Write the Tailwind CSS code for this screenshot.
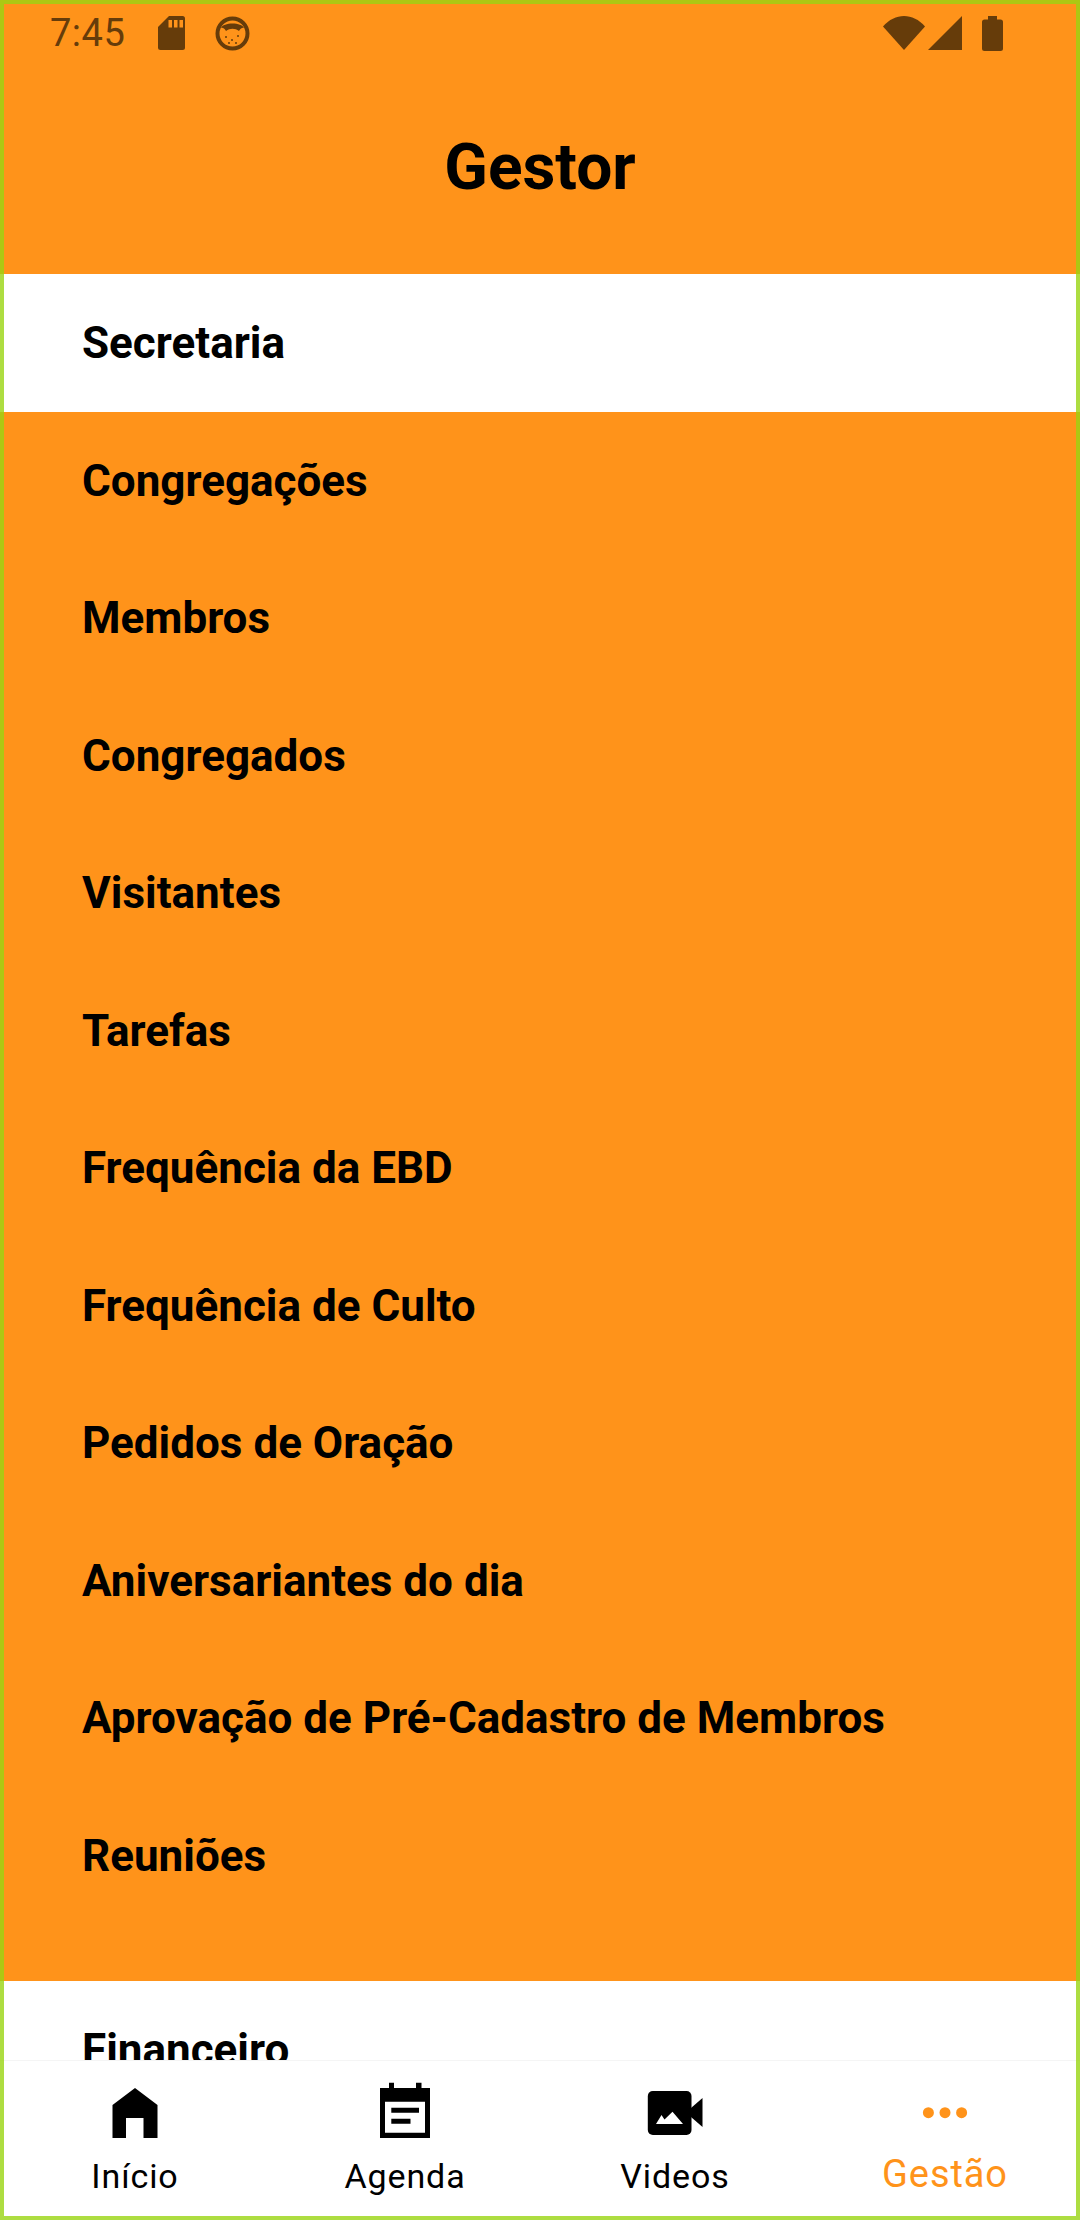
<!DOCTYPE html>
<html lang="pt">
<head>
<meta charset="utf-8">
<script src="https://cdn.jsdelivr.net/npm/@tailwindcss/browser@4"></script>
<title>Gestor</title>
</head>
<body class="m-0">
<div class="relative flex flex-col w-[1080px] h-[2220px] overflow-hidden bg-white font-['Roboto',sans-serif] text-black">
  <header class="shrink-0 h-[274px] bg-[#ff931a] flex flex-col">
    <div class="h-[66px] pt-[16px] pl-[50px] pr-[77px] flex items-start text-[#663c0a]">
      <span class="w-[108px] text-[38px] leading-[34px] tracking-[0.5px]">7:45</span>
      <svg class="w-[27px] h-[34px]" viewBox="0 0 27 34"><path fill="#663c0a" d="M11 0H24.5A2.5 2.5 0 0 1 27 2.500V31.500A2.500 2.500 0 0 1 24.500 34H2.500A2.500 2.500 0 0 1 0 31.500V11z"/><path fill="#ff931a" d="M10.500 4h3.500v7.500h-3.500zM16 4h3.500v7.500H16zM21.500 4H25v7.500h-3.500z"/></svg>
      <svg class="ml-[30px] w-[35px] h-[35px]" viewBox="0 0 35 35"><circle cx="17.500" cy="17.500" r="15" fill="#ff931a" stroke="#663c0a" stroke-width="4"/><path fill="#663c0a" d="M6 12C8 6 27 6 29 12C26 11 25 14 24 15C20 12 15 12 11 15C10 14 9 11 6 12z"/><g fill="#663c0a"><circle cx="11" cy="21" r="1"/><circle cx="17" cy="24" r="1"/><circle cx="23" cy="20" r="1"/><circle cx="14" cy="27" r="1"/><circle cx="21" cy="27" r="1"/></g></svg>
      <div class="flex-1"></div>
      <svg class="w-[42px] h-[34px]" viewBox="0 0 42 34"><path fill="#663c0a" d="M0 10.500C12 -3.500 30 -3.500 42 10.500L21 34z"/></svg>
      <svg class="ml-[3px] w-[34px] h-[34px]" viewBox="0 0 34 34"><path fill="#663c0a" d="M34 0V34H0z"/></svg>
      <svg class="ml-[20px] w-[21px] h-[35px]" viewBox="0 0 21 35"><path fill="#663c0a" d="M6 0H15V3.500H18.500A2.500 2.500 0 0 1 21 6V32.500A2.500 2.500 0 0 1 18.500 35H2.500A2.500 2.500 0 0 1 0 32.500V6A2.500 2.500 0 0 1 2.500 3.500H6z"/></svg>
    </div>
    <div class="flex-1 flex items-center justify-center">
      <h1 class="text-[64px] leading-none font-bold relative top-[-2px]">Gestor</h1>
    </div>
  </header>

  <main class="flex-1 min-h-0 overflow-hidden">
    <div class="h-[138px] pl-[82px] flex items-center bg-white text-[44px] font-bold">Secretaria</div>
    <ul class="bg-[#ff931a] pb-[56px] text-[44px] font-bold">
      <li class="h-[137.5px] pl-[82px] flex items-center">Congregações</li>
      <li class="h-[137.5px] pl-[82px] flex items-center">Membros</li>
      <li class="h-[137.5px] pl-[82px] flex items-center">Congregados</li>
      <li class="h-[137.5px] pl-[82px] flex items-center">Visitantes</li>
      <li class="h-[137.5px] pl-[82px] flex items-center">Tarefas</li>
      <li class="h-[137.5px] pl-[82px] flex items-center">Frequência da EBD</li>
      <li class="h-[137.5px] pl-[82px] flex items-center">Frequência de Culto</li>
      <li class="h-[137.5px] pl-[82px] flex items-center">Pedidos de Oração</li>
      <li class="h-[137.5px] pl-[82px] flex items-center">Aniversariantes do dia</li>
      <li class="h-[137.5px] pl-[82px] flex items-center">Aprovação de Pré-Cadastro de Membros</li>
      <li class="h-[137.5px] pl-[82px] flex items-center">Reuniões</li>
    </ul>
    <div class="h-[138px] pl-[82px] flex items-center bg-white text-[44px] font-bold">Financeiro</div>
  </main>

  <nav class="shrink-0 h-[160px] grid grid-cols-4 bg-white border-t border-[#f5f5f5]">
    <a class="flex flex-col items-center pt-[23px]">
      <svg class="w-[64px] h-[64px] overflow-visible" viewBox="0 0 64 64"><path fill="#000" d="M32 4L54.500 21V54H40.500V34H23V54H9.500V21z"/></svg>
      <span class="mt-[8px] text-[34px] leading-[40px] tracking-[0.9px]">Início</span>
    </a>
    <a class="flex flex-col items-center pt-[23px]">
      <svg class="w-[64px] h-[64px] overflow-visible" viewBox="0 0 64 64"><path fill="#000" fill-rule="evenodd" d="M16 -1.300H21V4H43V-1.300H48.500V4H57V54H7V4H16zM12 17.700V48.700H52V17.700z"/><path fill="#000" d="M18.300 23.700H46V28.700H18.300zM18.300 34.700H37.500V39.700H18.300z"/></svg>
      <span class="mt-[8px] text-[34px] leading-[40px] tracking-[0.9px]">Agenda</span>
    </a>
    <a class="flex flex-col items-center pt-[23px]">
      <svg class="w-[64px] h-[64px] overflow-visible" viewBox="0 0 64 64"><rect x="4.800" y="7" width="43.700" height="44" rx="5" fill="#000"/><path fill="#000" d="M48 24L59.500 14V43L48 33z"/><path fill="#fff" d="M13 40L18.500 31L21.500 35.500L29.500 27.700L40 40z"/></svg>
      <span class="mt-[8px] text-[34px] leading-[40px] tracking-[0.9px]">Videos</span>
    </a>
    <a class="flex flex-col items-center pt-[23px]">
      <svg class="w-[64px] h-[64px] overflow-visible" viewBox="0 0 64 64"><g fill="#ff931a"><circle cx="15.400" cy="28.700" r="5.500"/><circle cx="32" cy="28.700" r="5.500"/><circle cx="48.600" cy="28.700" r="5.500"/></g></svg>
      <span class="mt-[4px] text-[38px] leading-[44px] tracking-[0.9px] text-[#ff931a]">Gestão</span>
    </a>
  </nav>

  <div class="absolute inset-0 border-4 border-[#98d412]/80 pointer-events-none"></div>
</div>
</body>
</html>
